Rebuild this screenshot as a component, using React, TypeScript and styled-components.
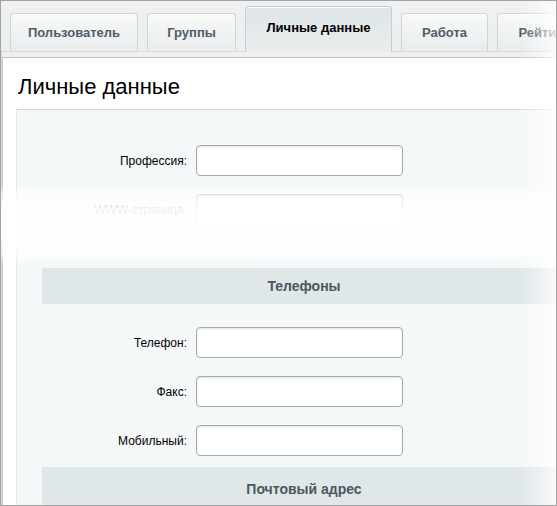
import { createGlobalStyle, styled } from "styled-components";

const GlobalStyle = createGlobalStyle`
  html, body {
    margin: 0;
    padding: 0;
    background: #ffffff;
  }
  body {
    font-family: "Liberation Sans", Arial, sans-serif;
  }
`;

const tabs = [
  { label: "Пользователь", width: 128 },
  { label: "Группы", width: 89 },
  { label: "Личные данные", width: 147, active: true },
  { label: "Работа", width: 87 },
  { label: "Рейтинг", width: 94 },
];

const phoneRows = ["Телефон:", "Факс:", "Мобильный:"];

export default function App() {
  return (
    <>
      <GlobalStyle />
      <Frame>
        <TabBar>
          {tabs.map((t) => (
            <Tab key={t.label} $w={t.width} $active={!!t.active}>
              {t.label}
            </Tab>
          ))}
        </TabBar>
        <Panel>
          <Title>Личные данные</Title>
          <Content>
            <FormGrid $top={35}>
              <Label>Профессия:</Label>
              <Input />
              <Label>WWW-страница:</Label>
              <Input />
            </FormGrid>
            <SectionHeader $top={43} $h={36}>
              Телефоны
            </SectionHeader>
            <FormGrid $top={23}>
              {phoneRows.map((label) => (
                <Row key={label}>
                  <Label>{label}</Label>
                  <Input />
                </Row>
              ))}
            </FormGrid>
            <SectionHeader $top={11} $h={44}>
              Почтовый адрес
            </SectionHeader>
          </Content>
          <TornFade />
        </Panel>
        <RightFade />
      </Frame>
    </>
  );
}

const Frame = styled.div`
  position: relative;
  width: 557px;
  height: 506px;
  box-sizing: border-box;
  border: 1px solid #a3a3a3;
  box-shadow: inset 1px 0 0 #d4d4d4, inset 0 -1px 0 #c8c8c8;
  overflow: hidden;
  background: #eef0f1;
`;

const TabBar = styled.div`
  display: flex;
  align-items: flex-end;
  gap: 9px;
  height: 50px;
  padding: 0 0 0 9px;
  background: linear-gradient(to bottom, #eef0f1, #eceff0);
  border-bottom: 1px solid #d6dadc;
  white-space: nowrap;
`;

const Tab = styled.div<{ $w: number; $active: boolean }>`
  flex: none;
  width: ${(p) => p.$w}px;
  height: ${(p) => (p.$active ? 46 : 38)}px;
  margin-bottom: ${(p) => (p.$active ? -1 : 0)}px;
  box-sizing: border-box;
  display: flex;
  align-items: center;
  justify-content: center;
  padding-bottom: ${(p) => (p.$active ? 4 : 0)}px;
  border: 1px solid ${(p) => (p.$active ? "#c6cdd0" : "#cfd4d7")};
  border-bottom: none;
  border-radius: 4px 4px 0 0;
  background: ${(p) =>
    p.$active
      ? "linear-gradient(to bottom, #dfe5e7, #e9edee)"
      : "linear-gradient(to bottom, #f8f9f9, #e9eced)"};
  box-shadow: inset 0 1px 0 #ffffff;
  font-size: 13px;
  font-weight: bold;
  color: ${(p) => (p.$active ? "#000000" : "#4f5d69")};
  position: relative;
`;

const Panel = styled.div`
  position: relative;
  margin-top: 5px;
  margin-left: 1px;
  height: 460px;
  background: #ffffff;
  border-top: 1px solid #bfc4c6;
  border-left: 1px solid #c7cbcd;
`;

const Title = styled.h1`
  margin: 0;
  padding: 16px 0 0 15px;
  height: 35px;
  font-size: 22px;
  font-weight: normal;
  line-height: 25px;
  color: #000000;
`;

const Content = styled.div`
  margin-left: 13px;
  height: 420px;
  background: #f5f8f9;
  border-top: 1px solid #d3d8da;
  border-left: 1px solid #dde5e9;
`;

const FormGrid = styled.div<{ $top: number }>`
  display: grid;
  grid-template-columns: 170px 207px;
  column-gap: 9px;
  row-gap: 18px;
  padding-top: ${(p) => p.$top}px;
`;

const Row = styled.div`
  display: contents;
`;

const Label = styled.label`
  align-self: center;
  text-align: right;
  font-size: 12px;
  color: #000000;
`;

const Input = styled.div`
  height: 31px;
  box-sizing: border-box;
  background: #ffffff;
  border: 1px solid #a3abb1;
  border-radius: 4px;
  box-shadow: inset 0 1px 2px rgba(0, 0, 0, 0.12);
`;

const SectionHeader = styled.div<{ $top: number; $h: number }>`
  margin: ${(p) => p.$top}px 0 0 25px;
  width: 524px;
  height: ${(p) => p.$h}px;
  display: flex;
  align-items: center;
  justify-content: center;
  background: #e0e7e9;
  font-size: 14px;
  font-weight: bold;
  color: #4b575f;
`;

const TornFade = styled.div`
  position: absolute;
  left: -2px;
  right: 0;
  top: 126px;
  height: 82px;
  pointer-events: none;
  background: linear-gradient(
    to bottom,
    rgba(255, 255, 255, 0) 0%,
    rgba(255, 255, 255, 0.6) 12%,
    rgba(255, 255, 255, 0.93) 30%,
    rgba(255, 255, 255, 0.95) 60%,
    rgba(255, 255, 255, 0.7) 85%,
    rgba(255, 255, 255, 0) 100%
  );
`;

const RightFade = styled.div`
  position: absolute;
  top: 0;
  bottom: 0;
  right: 0;
  width: 36px;
  pointer-events: none;
  background: linear-gradient(
    to right,
    rgba(255, 255, 255, 0) 0%,
    rgba(255, 255, 255, 0.35) 50%,
    rgba(255, 255, 255, 0.8) 100%
  );
`;
